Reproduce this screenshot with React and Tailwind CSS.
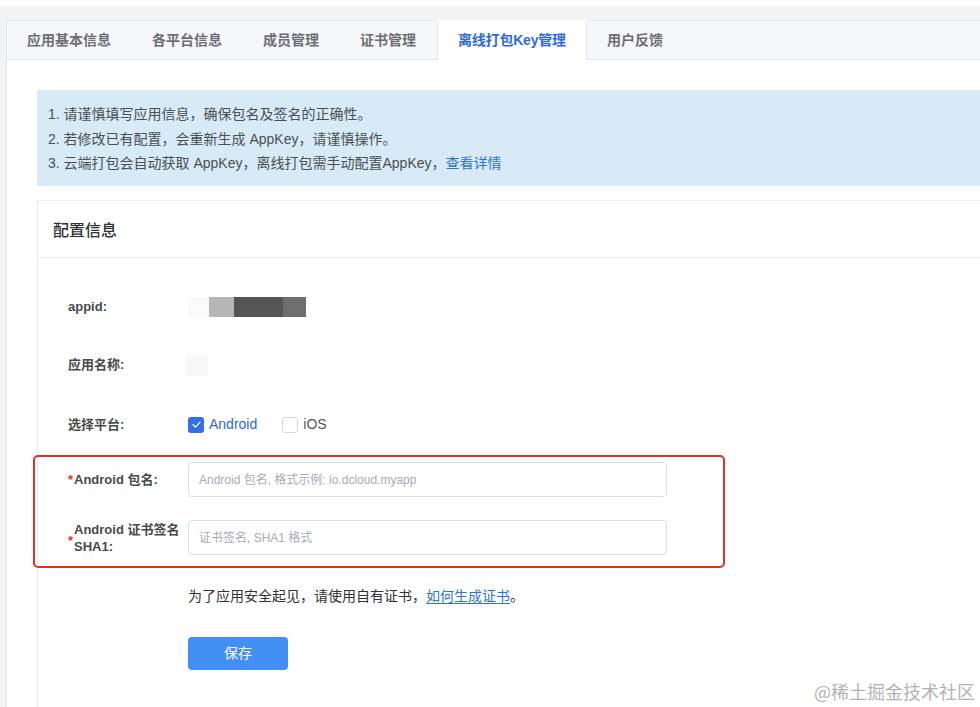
export default function App() {
  const tabs = ["应用基本信息", "各平台信息", "成员管理", "证书管理", "离线打包Key管理", "用户反馈"];
  const active = 4;
  return (
    <div className="relative w-[980px] h-[707px] overflow-hidden bg-white pt-[6px] font-['Liberation_Sans','Noto_Sans_CJK_SC',sans-serif]">
      <div className="h-full bg-[#f2f3f5] pl-[6px] pt-[14px]">
        <div className="h-full w-[1100px] bg-white border-l border-[#e4e7ed]">
          {/* Tabs */}
          <div className="flex h-[40px] bg-[#f5f7fa] border-t border-b border-[#e4e7ed]">
            {tabs.map((t, i) =>
              i === active ? (
                <div
                  key={t}
                  className="-mt-[1px] -mb-[1px] flex h-[41px] items-center bg-white border-l border-r border-[#e4e7ed] pl-[20px] pr-[20px] text-[14px] font-semibold tracking-[-0.2px] text-[#2f6bd6]"
                >
                  {t}
                </div>
              ) : (
                <div key={t} className="flex items-center pl-[20px] pr-[21px] text-[14px] font-semibold text-[#6b6e73]">
                  {t}
                </div>
              )
            )}
          </div>

          {/* Content */}
          <div className="pl-[30px] pt-[30px]">
            <div className="h-[96px] bg-[#d7eaf5] pl-[11px] pt-[12px] text-[14px] leading-[24.5px] text-[#4a4f55]">
              <div>1. 请谨慎填写应用信息，确保包名及签名的正确性。</div>
              <div>2. 若修改已有配置，会重新生成 AppKey，请谨慎操作。</div>
              <div>
                3. 云端打包会自动获取 AppKey，离线打包需手动配置AppKey，
                <span className="text-[#2f72d6]">查看详情</span>
              </div>
            </div>

            <div className="mt-[14px] min-h-[540px] border-l border-t border-[#ebeef5]">
              <div className="flex h-[57px] items-center border-b border-[#ebeef5] pl-[15px] pt-[3px] text-[16px] font-medium text-[#303133]">
                配置信息
              </div>
              <div className="pl-[30px] pt-[31px] text-[13px]">
                {/* appid */}
                <div className="mb-[22px] flex h-[36px] items-center">
                  <div className="w-[120px] font-semibold text-[#4a4a4a]">appid:</div>
                  <div className="flex items-start">
                    <div className="h-[20px] w-[21px] bg-[#fafafa]"></div>
                    <div className="h-[20px] w-[25px] bg-[#b5b5b5]"></div>
                    <div className="h-[20px] w-[49px] bg-[#555555]"></div>
                    <div className="h-[20px] w-[23px] bg-[#6e6e6e]"></div>
                  </div>
                </div>
                {/* app name */}
                <div className="mb-[22px] flex h-[36px] items-center">
                  <div className="w-[120px] font-semibold text-[#4a4a4a]">应用名称:</div>
                  <div className="-ml-[2px] h-[22px] w-[22px] bg-[#f8f8f8]"></div>
                </div>
                {/* platform */}
                <div className="mb-[21px] flex h-[36px] items-center pt-[3px]">
                  <div className="w-[120px] font-semibold text-[#4a4a4a]">选择平台:</div>
                  <div className="flex items-center">
                    <span className="flex h-[16px] w-[16px] items-center justify-center rounded-[3px] bg-[#3370e6]">
                      <svg width="11" height="11" viewBox="0 0 12 12" fill="none">
                        <path d="M2.2 6.2 L4.9 8.8 L9.8 3.4" stroke="white" strokeWidth="1.4" strokeLinecap="round" strokeLinejoin="round" />
                      </svg>
                    </span>
                    <span className="ml-[5px] text-[14px] text-[#2f66d4]">Android</span>
                    <span className="ml-[25px] h-[16px] w-[16px] rounded-[3px] border border-[#d4d7dd] bg-white"></span>
                    <span className="ml-[5px] text-[14px] text-[#555]">iOS</span>
                  </div>
                </div>
                {/* android package */}
                <div className="mb-[23px] flex h-[35px] items-center">
                  <div className="flex w-[120px] items-center font-semibold text-[#4a4a4a]">
                    <span className="w-[6px] text-[#e0302a]">*</span>
                    <span>Android 包名:</span>
                  </div>
                  <input
                    className="h-[35px] w-[479px] rounded-[4px] border border-[#dcdfe6] px-[10px] text-[12px] text-[#333] outline-none placeholder:text-[#a8abb2]"
                    placeholder="Android 包名, 格式示例: io.dcloud.myapp"
                  />
                </div>
                {/* sha1 */}
                <div className="mb-[23px] flex h-[35px] items-center">
                  <div className="flex w-[120px] items-center font-semibold text-[#4a4a4a]">
                    <span className="mt-[6px] w-[6px] text-[#e0302a]">*</span>
                    <span className="leading-[17px]">
                      Android 证书签名
                      <br />
                      SHA1:
                    </span>
                  </div>
                  <input
                    className="h-[35px] w-[479px] rounded-[4px] border border-[#dcdfe6] px-[10px] text-[12px] text-[#333] outline-none placeholder:text-[#a8abb2]"
                    placeholder="证书签名, SHA1 格式"
                  />
                </div>
                {/* note */}
                <div className="flex h-[36px] items-center pl-[120px] text-[14px] text-[#303133]">
                  为了应用安全起见，请使用自有证书，
                  <span className="text-[#2f72d6] underline underline-offset-2">如何生成证书</span>。
                </div>
                <div className="mt-[23px] pl-[120px]">
                  <button className="h-[33px] w-[100px] rounded-[4px] bg-[#4390f5] text-[14px] text-white">保存</button>
                </div>
              </div>
            </div>
          </div>
        </div>
      </div>

      {/* annotation red box */}
      <div className="pointer-events-none absolute left-[33px] top-[455px] h-[113px] w-[692px] rounded-[5px] border-2 border-[#e0302a]"></div>

      {/* watermark */}
      <div className="pointer-events-none absolute right-[5px] top-[678px] text-[18px] text-[#b3b3b3] font-['Noto_Sans_CJK_SC',sans-serif]">
        @稀土掘金技术社区
      </div>
    </div>
  );
}
